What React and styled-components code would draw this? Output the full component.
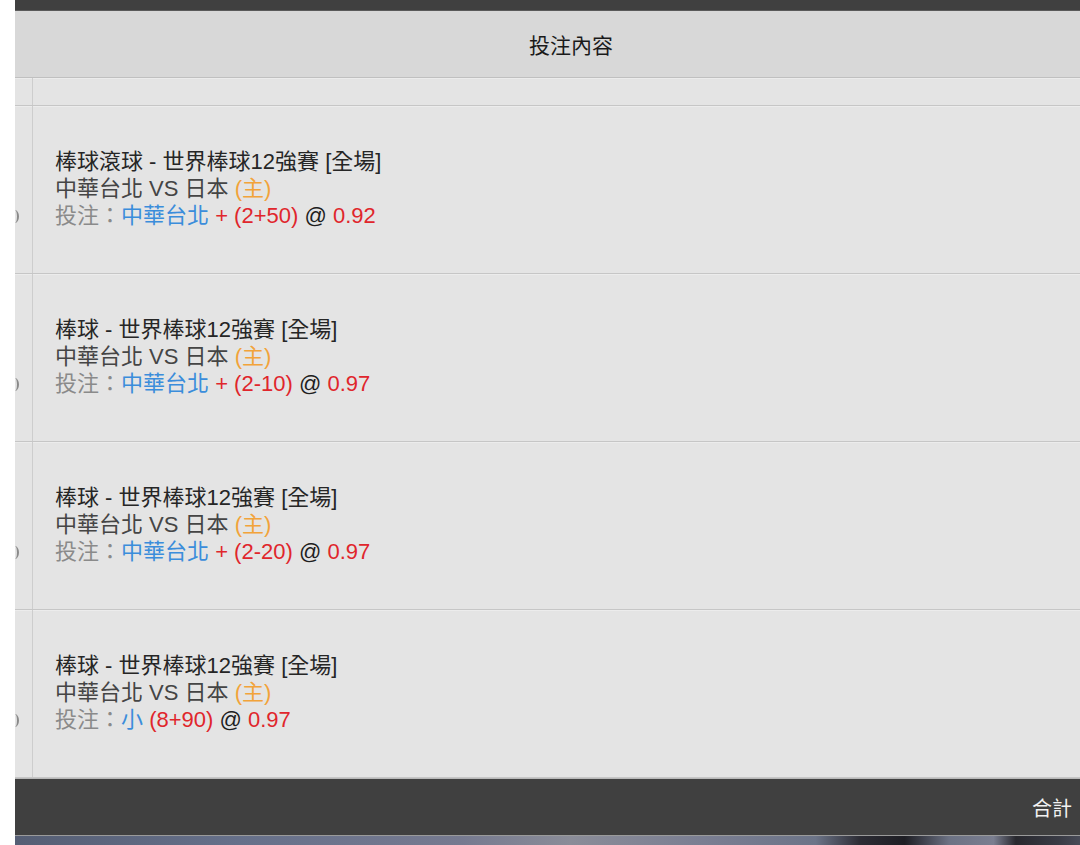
import React from 'react';
import styled, { createGlobalStyle } from 'styled-components';

const GlobalStyle = createGlobalStyle`
  html, body {
    margin: 0;
    padding: 0;
    background: #ffffff;
    overflow: hidden;
  }
  body {
    font-family: 'Liberation Sans', 'Noto Sans CJK TC', Arial, sans-serif;
  }
`;

const Page = styled.div`
  width: 1080px;
  height: 845px;
  padding-left: 15px;
  box-sizing: border-box;
  overflow: hidden;
`;

const Table = styled.div`
  width: 1112px;
  display: flex;
  flex-direction: column;
`;

const TopBar = styled.div`
  height: 10px;
  background: #404040;
  border-bottom: 1px solid #5a5a5a;
`;

const Header = styled.div`
  height: 66px;
  background: #d8d8d8;
  border-bottom: 1px solid #c0c0c0;
  display: flex;
  align-items: center;
  justify-content: center;
  font-family: 'Noto Sans CJK TC', sans-serif;
  font-size: 21px;
  color: #1a1a1a;
`;

const Row = styled.div`
  display: grid;
  grid-template-columns: 18px 1fr;
  height: ${(p) => p.height}px;
  background: #e4e4e4;
  border-bottom: 1px solid #c6c6c6;
  box-shadow: inset 0 1px 0 #ececec;
`;

const SideCell = styled.div`
  border-right: 1px solid #cdcdcd;
  overflow: hidden;
  display: flex;
  align-items: center;
`;

/* sliver of a cut-off glyph peeking in from the left edge */
const CutGlyph = styled.span`
  display: block;
  width: 6px;
  height: 13px;
  margin-left: -4px;
  margin-top: 54px;
  border-right: 2px solid #8a8a8a;
  border-radius: 50%;
`;

const BetCell = styled.div`
  display: flex;
  flex-direction: column;
  justify-content: center;
  padding-left: 22px;
  padding-bottom: 2px;
  font-size: 22px;
  line-height: 27px;
`;

const Line = styled.div`
  color: ${(p) => p.color || '#262626'};
  white-space: nowrap;
`;

const Tone = styled.span`
  color: ${(p) => p.color};
`;

const Footer = styled.div`
  height: 56px;
  background: #404040;
  border-top: 1px solid #b8b8b8;
  border-bottom: 1px solid #9a9a9a;
  display: flex;
  align-items: center;
  justify-content: flex-end;
  padding-right: 55px;
  font-family: 'Noto Sans CJK TC', sans-serif;
  font-size: 20px;
  color: #f2f2f2;
`;

const Backdrop = styled.div`
  height: 11px;
  background: linear-gradient(
    to right,
    #555e74 0%,
    #66708a 20%,
    #767a90 40%,
    #8a8c98 50%,
    #7a7e92 62%,
    #6c7488 72%,
    #2c2c34 76%,
    #1e1e24 80%,
    #6c7284 84%,
    #7a7e90 88%,
    #28282e 90%,
    #3a3c46 94%,
    #6a6e80 100%
  );
`;

const BLUE = '#3b8ddb';
const RED = '#e0262c';
const ORANGE = '#f2a33a';

const bets = [
  { league: '棒球滾球 - 世界棒球12強賽 [全場]', pick: '中華台北', line: '+ (2+50)', odds: '0.92' },
  { league: '棒球 - 世界棒球12強賽 [全場]', pick: '中華台北', line: '+ (2-10)', odds: '0.97' },
  { league: '棒球 - 世界棒球12強賽 [全場]', pick: '中華台北', line: '+ (2-20)', odds: '0.97' },
  { league: '棒球 - 世界棒球12強賽 [全場]', pick: '小', line: '(8+90)', odds: '0.97' },
];

const App = () => (
  <Page>
    <GlobalStyle />
    <Table>
      <TopBar />
      <Header>投注內容</Header>
      <Row height={27}>
        <SideCell />
        <div />
      </Row>
      {bets.map((b, i) => (
        <Row key={i} height={167}>
          <SideCell>
            <CutGlyph />
          </SideCell>
          <BetCell>
            <Line>{b.league}</Line>
            <Line color="#454545">
              中華台北 VS 日本 <Tone color={ORANGE}>(主)</Tone>
            </Line>
            <Line color="#8a8a8a">
              投注：<Tone color={BLUE}>{b.pick}</Tone> <Tone color={RED}>{b.line}</Tone>{' '}
              <Tone color="#1e1e1e">@</Tone> <Tone color={RED}>{b.odds}</Tone>
            </Line>
          </BetCell>
        </Row>
      ))}
      <Footer>合計</Footer>
      <Backdrop />
    </Table>
  </Page>
);

export default App;
